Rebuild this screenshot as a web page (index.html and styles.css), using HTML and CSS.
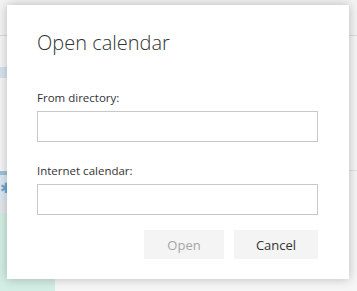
FILE: index.html
```html
<!DOCTYPE html>
<html lang="en">
<head>
    <meta charset="UTF-8">
    <meta name="viewport" content="width=device-width, initial-scale=1.0">
    <title>Open calendar</title>
    <link rel="stylesheet" href="styles.css">
</head>
<body>
    <div class="page">
        <div class="topbar"></div>
        <div class="main">
            <div class="side">
                <div class="side-gap"></div>
                <div class="side-item"></div>
                <div class="side-space"></div>
                <div class="side-bar"></div>
                <div class="side-star">&#10033;</div>
                <div class="side-row"></div>
                <div class="side-green"></div>
            </div>
            <div class="content">
                <div class="content-top"></div>
            </div>
        </div>
    </div>

    <div class="dialog">
        <h2>Open calendar</h2>
        <form id="open-form">
            <div class="form-group">
                <label for="directory">From directory:</label>
                <input type="text" id="directory" name="directory">
            </div>
            <div class="form-group">
                <label for="internet">Internet calendar:</label>
                <input type="text" id="internet" name="internet">
            </div>
            <div class="buttons">
                <button type="submit" class="btn btn-open" disabled>Open</button>
                <button type="button" class="btn">Cancel</button>
            </div>
        </form>
    </div>
</body>
</html>
```

FILE: styles.css
```css
body {
    margin: 0;
    font-family: "Open Sans", "Noto Sans", sans-serif;
    background-color: #f6f6f6;
    overflow: hidden;
}
.page {
    height: 291px;
    display: flex;
    flex-direction: column;
}
.topbar {
    height: 35px;
    border-bottom: 1px solid #dcdcdc;
    background-color: #f4f4f4;
}
.main {
    flex: 1;
    display: flex;
}
.side {
    width: 55px;
    display: flex;
    flex-direction: column;
}
.side-gap {
    height: 31px;
}
.side-item {
    height: 11px;
    background-color: #d6e4ee;
}
.side-space {
    height: 93px;
}
.side-bar {
    height: 4px;
    background-color: #9fc3dd;
}
.side-star {
    height: 25px;
    background-color: #dbe9f3;
    color: #6aa6d6;
    font-size: 14px;
    line-height: 25px;
}
.side-row {
    height: 13px;
    background-color: #e4e8ec;
}
.side-green {
    flex: 1;
    background-color: #d3eee4;
}
.content {
    flex: 1;
}
.content-top {
    height: 134px;
    border-bottom: 1px solid #e2e2e2;
}
.dialog {
    position: absolute;
    left: 7px;
    top: 5px;
    width: 342px;
    height: 274px;
    box-sizing: border-box;
    padding: 24px 31px 0 30px;
    background-color: #fff;
    box-shadow: 0 0 10px rgba(0, 0, 0, 0.25);
}
.dialog h2 {
    margin: 0 0 33px 0;
    font-size: 20px;
    font-weight: 300;
    line-height: 28px;
    color: #333;
}
.form-group + .form-group {
    margin-top: 21px;
}
.form-group label {
    display: block;
    margin-bottom: 5px;
    font-size: 11.5px;
    line-height: 16px;
    color: #333;
}
.form-group input[type="text"] {
    display: block;
    width: 100%;
    height: 31px;
    margin: 0;
    border: 1px solid #c8c8c8;
    box-sizing: border-box;
}
.buttons {
    display: flex;
    justify-content: flex-end;
    gap: 10px;
    margin-top: 15px;
}
.btn {
    height: 29px;
    padding: 0;
    border: none;
    background-color: #f4f4f4;
    font-family: "Open Sans", "Noto Sans", sans-serif;
    font-size: 13px;
    color: #333;
    width: 84px;
}
.btn-open {
    width: 80px;
    color: #a6a6a6;
}
```
